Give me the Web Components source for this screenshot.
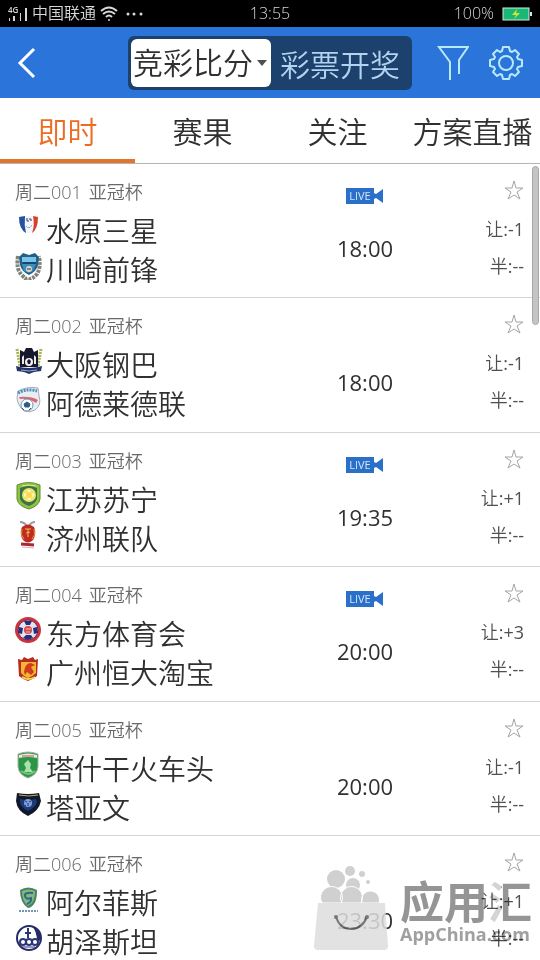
<!DOCTYPE html>
<html lang="zh-CN">
<head>
<meta charset="utf-8">
<meta name="viewport" content="width=device-width, initial-scale=1">
<title>竞彩比分</title>
<style>
    html, body {
        margin: 0;
        height: 100%;
        overflow: hidden;
    }
    body {
        background: #fff;
        color: #303030;
        font-family: "Open Sans", "Noto Sans CJK SC", sans-serif;
        font-weight: 350;
    }
</style>
</head>
<body>
<score-app></score-app>

<script>
const CRESTS = {
    suwon: `
        <path d="M4 4q5-2 9-1q5-1 10 1q0 11-5 15q-4 2-9 0Q4 14 4 4z" fill="#f4f6fa"/>
        <path d="M4 4l6-1q-1 9 1 17Q4 16 4 4z" fill="#2452a0"/>
        <path d="M23 4l-5-1q2 9-1 17q6-4 6-16z" fill="#d8402c"/>
        <path d="M12 5v3h2M15 5v2h2" stroke="#273c74" fill="none"/>
        <path d="M11 13q3 4 6-1" stroke="#8db0d8" fill="none"/>`,
    kawasaki: `
        <path d="M3 4q-2 13 3 18q5 6 7 5q4 1 9-5q4-6 2-18" fill="none" stroke="#7e8578" stroke-width="4" stroke-dasharray="3 1"/>
        <path d="M4 5l4-4 6 2 6-2 4 4-1 8q-2 7-9 10q-7-3-9-10z" fill="#235f87"/>
        <path d="M7 5h14v5H7z" fill="#77c4ed"/>
        <path d="M7 12h14l-3 7-4 2-5-2z" fill="#3d8fc2"/>
        <circle cx="14" cy="17" r="3" fill="#d8dcc8"/>
        <path d="M8 11h13M12 17h4" stroke="#17334a"/>`,
    gamba: `
        <path d="M2 2l3 17M26 2l-3 17" stroke="#aab24c" stroke-width="3" stroke-dasharray="2 1"/>
        <path d="M5 3l4 2 2-4h6l2 4 4-2v17H5z" fill="#17182c"/>
        <path d="M7 10l2-2v9H7zM21 10l-2-2v9h2z" fill="#e8e8ee"/>
        <circle cx="14" cy="15" r="4" fill="#f0f0f4"/>
        <path d="M11 5q3 6 6 0l-1 6h-4zM12 14l2-2 2 2-1 3h-2z" fill="#17182c"/>
        <path d="M1 19q13 4 26 0l-1 5-7 1-5 2-5-2-7-1z" fill="#233267"/>
        <path d="M6 23q8 2 16 0" stroke="#9aa4cc" fill="none"/>`,
    adelaide: `
        <path d="M3 5Q13 0 23 2l1 8q3 9-4 14q-5 3-11 1Q3 20 2 12z" fill="#e9eef4" stroke="#a5abb8"/>
        <path d="M3 7q9-5 19-2" stroke="#4e8fba" stroke-width="3" stroke-dasharray="2 1" fill="none"/>
        <path d="M4 11q12-1 19 3l-2 3q-8-5-16-4z" fill="#d96670"/>
        <circle cx="12" cy="19" r="6" fill="#fff" stroke="#7594b5"/>
        <path d="M9 18l3-2 3 2-1 3h-4zM7 22l2 2M16 22l-2 2" fill="#2f5a8c" stroke="#2f5a8c"/>`,
    jiangsu: `
        <path d="M2 3Q14-2 25 3v14q-1 7-11 10Q3 24 2 17z" fill="#93bf45" stroke="#5f8d2e"/>
        <path d="M5 6Q14 2 22 6v11q-2 5-8 7q-7-2-9-7z" fill="#36754a"/>
        <circle cx="14" cy="13" r="7" fill="#f0e46c"/>
        <path d="M14 8v10M9 13h10" stroke="#fff7b8" stroke-width="3"/>
        <circle cx="14" cy="13" r="3" fill="#f7d95a"/>
        <path d="M7 4q7-2 14 0" stroke="#dfe98f" fill="none"/>`,
    jeju: `
        <path d="M5 1q4 0 7 4M20 1q-4 0-6 4" stroke="#9a9aa4" stroke-width="2" fill="none"/>
        <path d="M7 6q6-5 12 0q3 6-1 13q-5 5-10 0Q4 12 7 6z" fill="#bf2b22"/>
        <path d="M7 8q-2 6 2 10M19 8q2 6-2 10" stroke="#e69a35" fill="none"/>
        <path d="M10 8h6M13 8v8M11 12l4-1" stroke="#f2c048" fill="none"/>
        <path d="M6 23l13 1" stroke="#a52a35" stroke-width="3"/>
        <path d="M7 26l12 1" stroke="#ddb2b4"/>`,
    eastern: `
        <circle cx="13" cy="14" r="13" fill="#c93440"/>
        <circle cx="13" cy="14" r="10" fill="#dfe3f4" stroke="#882a48"/>
        <path d="M9 5h8l-2 4h-4zM4 11l4 1-1 6-4-1zM22 11l-4 1 1 6 4-1zM8 22l3-3h5l2 3-5 2z" fill="#272f77"/>
        <circle cx="13" cy="14" r="4" fill="#d4494c"/>
        <path d="M11 13h5M11 16h4" stroke="#f5bd9c"/>`,
    evergrande: `
        <path d="M3 4l4 1 2-3 4 2 5-2 2 3 3-1-1 17q-4 3-9 5q-6-2-9-5z" fill="#b92b20"/>
        <path d="M6 7h15v11q-3 3-8 5q-5-2-7-5z" fill="#f2b832"/>
        <path d="M9 17q1-9 7-9l4 2-4 2 3 5-3 3-4-3-2 3z" fill="#d33b20"/>
        <path d="M7 22q6 4 13 0" stroke="#f4d34e" stroke-width="2" fill="none"/>`,
    lokomotiv: `
        <path d="M3 3q10-4 20 0v13q-1 8-10 11Q4 24 3 16z" fill="#2c9647" stroke="#a6b5a7"/>
        <path d="M4 4q9-3 18 0v3q-9-2-18 0z" fill="#eee8df"/>
        <path d="M7 5h12" stroke="#bc564b"/>
        <path d="M13 9l3 4-1 4 3 4H9l2-4-2-4z" fill="#a9e0ac"/>
        <path d="M6 20q8 6 14 0" stroke="#77c27a" stroke-width="2" fill="none"/>`,
    taawoun: `
        <path d="M2 3q11 2 22 0l2 8q-2 10-13 15Q2 21 1 11z" fill="#11182b"/>
        <path d="M4 5q10 2 19 0" stroke="#c5ad57" fill="none"/>
        <path d="M5 9q8 2 16 0l1 3q-2 6-9 9Q6 18 5 12z" fill="#1c3978"/>
        <circle cx="13" cy="13" r="4" fill="#7d9fd6"/>
        <path d="M10 11l2 1M16 11l-2 1M13 13v3M11 15l-1 1" stroke="#1c3978"/>`,
    fateh: `
        <path d="M5 5q8-5 17 0q0 10-3 14q-3 4-6 4q-8-5-8-18z" fill="#468263"/>
        <path d="M7 6q7-3 13 0q0 8-3 12l-4 3Q7 16 7 6z" fill="#84b77d"/>
        <path d="M18 8q-9-1-8 3t6 2q1 4-4 6" stroke="#2a6a82" stroke-width="2" fill="none"/>
        <path d="M4 26h19" stroke="#6c98b6" stroke-width="2" stroke-dasharray="2 1"/>`,
    esteghlal: `
        <circle cx="14" cy="14" r="12" fill="#fff" stroke="#252c68" stroke-width="2"/>
        <path d="M16 2a12 12 0 0 1 10 14l-4 2q0-12-6-16z" fill="#252c68"/>
        <g fill="none" stroke="#2d3776" stroke-width="2">
            <circle cx="8" cy="18" r="3"/><circle cx="14" cy="18" r="3"/><circle cx="20" cy="18" r="3"/>
            <path d="M13 4v10M10 9h6"/>
        </g>
        <path d="M7 23h13" stroke="#2d3776"/>`
};

const MATCHES = [
    { no: '周二001', live: true, time: '18:00', rq: '-1', home: ['suwon', '水原三星'], away: ['kawasaki', '川崎前锋'] },
    { no: '周二002', live: false, time: '18:00', rq: '-1', home: ['gamba', '大阪钢巴'], away: ['adelaide', '阿德莱德联'] },
    { no: '周二003', live: true, time: '19:35', rq: '+1', home: ['jiangsu', '江苏苏宁'], away: ['jeju', '济州联队'] },
    { no: '周二004', live: true, time: '20:00', rq: '+3', home: ['eastern', '东方体育会'], away: ['evergrande', '广州恒大淘宝'] },
    { no: '周二005', live: false, time: '20:00', rq: '-1', home: ['lokomotiv', '塔什干火车头'], away: ['taawoun', '塔亚文'] },
    { no: '周二006', live: false, time: '23:30', rq: '+1', home: ['fateh', '阿尔菲斯'], away: ['esteghlal', '胡泽斯坦'] }
];

class StatusBar extends HTMLElement {
    constructor() {
        super();
        this.attachShadow({ mode: 'open' });
        this.shadowRoot.innerHTML = `
            <style>
                :host {
                    display: grid;
                    grid-template-columns: 1fr auto 1fr;
                    align-items: center;
                    height: 27px;
                    padding: 0 8px;
                    background: #000;
                    color: #d8d8d8;
                    font-size: 16px;
                    line-height: 27px;
                }
                div { display: flex; align-items: center; gap: 4px; }
                .right { justify-content: flex-end; gap: 8px; }
                svg { display: block; overflow: visible; }
            </style>
            <div>
                <svg width="20" height="18" viewBox="0 0 20 18" fill="#d8d8d8">
                    <text x="0" y="8" font-size="8" font-weight="600">4G</text>
                    <path d="M1 13h1v3H1zM5 11h2v5H5zM12 8h1v8h-1zM17 3h2v13h-2z"/>
                </svg>
                <span>中国联通</span>
                <svg width="18" height="16" viewBox="0 0 18 16" fill="none" stroke="#d8d8d8" stroke-width="2">
                    <path d="M1 5q8-7 16 0M3 8q6-5 12 0M6 11q3-3 6 0"/>
                    <circle cx="9" cy="14" r="1" fill="#d8d8d8" stroke="none"/>
                </svg>
                <svg width="24" height="16" viewBox="0 0 24 16" fill="#d8d8d8">
                    <circle cx="6" cy="8" r="1.5"/><circle cx="12" cy="8" r="1.5"/><circle cx="19" cy="8" r="1.5"/>
                </svg>
            </div>
            <span>13:55</span>
            <div class="right">
                <span>100%</span>
                <svg width="30" height="14" viewBox="0 0 30 14">
                    <rect x="1" y="1" width="26" height="12" fill="#18b878" stroke="#d8e8e0"/>
                    <path d="M28 5h2v4h-2z" fill="#d8e8e0"/>
                    <path d="M15 2l-5 6h4l-2 4 6-6h-4z" fill="#d8e030"/>
                </svg>
            </div>
        `;
    }
}

class AppHeader extends HTMLElement {
    constructor() {
        super();
        this.attachShadow({ mode: 'open' });
        this.shadowRoot.innerHTML = `
            <style>
                :host {
                    display: grid;
                    grid-template-columns: 1fr auto 1fr;
                    align-items: center;
                    height: 71px;
                    padding: 0 16px;
                    background: #2a74da;
                }
                button, select {
                    margin: 0;
                    padding: 0;
                    border: 0;
                    background: none;
                    color: inherit;
                    font: inherit;
                }
                svg { display: block; fill: none; }
                .back { justify-self: start; }
                .switch {
                    display: flex;
                    padding: 3px;
                    border-radius: 6px;
                    background: #1b416c;
                    font-size: 30px;
                }
                .picker { position: relative; }
                .picker::after {
                    content: "";
                    position: absolute;
                    top: 21px;
                    right: 4px;
                    border: 5px solid transparent;
                    border-top: 6px solid #505050;
                    border-bottom: 0;
                    pointer-events: none;
                }
                select {
                    appearance: none;
                    display: block;
                    width: 140px;
                    height: 48px;
                    padding: 0 2px;
                    border-radius: 6px;
                    background: #fff;
                    color: #303030;
                }
                .draw {
                    padding: 0 9px;
                    color: #b4d3f0;
                }
                .tools {
                    display: flex;
                    justify-content: flex-end;
                    gap: 19px;
                }
            </style>
            <button class="back" aria-label="返回">
                <svg width="22" height="34" viewBox="0 0 22 34" stroke="#fff" stroke-width="3"><path d="M18 3L4 17l14 14"/></svg>
            </button>
            <div class="switch">
                <div class="picker"><select aria-label="彩种"><option>竞彩比分</option></select></div>
                <button class="draw">彩票开奖</button>
            </div>
            <div class="tools">
                <button aria-label="筛选">
                    <svg width="32" height="36" viewBox="0 0 32 36" stroke="#b8eafa" stroke-width="2"><path d="M13 35V17L2 2h29L22 15v14"/></svg>
                </button>
                <button aria-label="设置">
                    <svg width="36" height="36" viewBox="0 0 36 36" stroke="#b8eafa" stroke-width="2" stroke-linejoin="round">
                        <path d="M15 2h6l1 4 2 1 3-2 4 4-2 3 1 2 4 1v6l-4 1-1 2 2 3-4 4-3-2-2 1-1 4h-6l-1-4-2-1-3 2-4-4 2-3-1-2-4-1v-6l4-1 1-2-2-3 4-4 3 2 2-1z"/>
                        <circle cx="18" cy="18" r="7"/>
                    </svg>
                </button>
            </div>
        `;
    }
}

class TabBar extends HTMLElement {
    constructor() {
        super();
        this.attachShadow({ mode: 'open' });
        this.shadowRoot.innerHTML = `
            <style>
                :host {
                    display: block;
                    border-bottom: 1px solid #b4b4b4;
                }
                nav { display: flex; }
                button {
                    flex: 1 1 0;
                    height: 65px;
                    margin: 0;
                    padding: 0 0 1px;
                    border: 0;
                    background: none;
                    color: inherit;
                    font: inherit;
                    font-size: 30px;
                    white-space: nowrap;
                }
                button[aria-selected="true"] {
                    padding-top: 3px;
                    border-bottom: 4px solid #e0762e;
                    color: #ee6c22;
                }
            </style>
            <nav role="tablist">
                <button role="tab" aria-selected="true">即时</button>
                <button role="tab" aria-selected="false">赛果</button>
                <button role="tab" aria-selected="false">关注</button>
                <button role="tab" aria-selected="false">方案直播</button>
            </nav>
        `;
        const tabs = this.shadowRoot.querySelectorAll('button');
        tabs.forEach(tab => tab.addEventListener('click', () => {
            tabs.forEach(t => t.setAttribute('aria-selected', String(t === tab)));
        }));
    }
}

class TeamLine extends HTMLElement {
    constructor() {
        super();
        this.attachShadow({ mode: 'open' });
        this.shadowRoot.innerHTML = `
            <style>
                :host {
                    display: flex;
                    gap: 3px;
                    font-size: 28px;
                    line-height: 39px;
                    white-space: nowrap;
                }
                svg {
                    flex: none;
                    margin-top: 1px;
                }
            </style>
            <svg width="28" height="28" viewBox="0 0 28 28"></svg>
            <span><slot></slot></span>
        `;
    }

    connectedCallback() {
        this.shadowRoot.querySelector('svg').innerHTML = CRESTS[this.getAttribute('crest')];
    }
}

class LiveBadge extends HTMLElement {
    constructor() {
        super();
        this.attachShadow({ mode: 'open' });
        this.shadowRoot.innerHTML = `
            <style>
                :host {
                    display: flex;
                    height: 16px;
                    font-size: 11px;
                    line-height: 16px;
                    font-weight: 400;
                    color: #d4e6fa;
                }
                span {
                    width: 28px;
                    background: #2a70c8;
                    text-align: center;
                }
            </style>
            <span>LIVE</span>
            <svg width="10" height="16" viewBox="0 0 10 16" fill="#2a70c8"><path d="M0 5l2 1 7-5v14l-7-5-2 1z"/></svg>
        `;
    }
}

class MatchRow extends HTMLElement {
    constructor() {
        super();
        this.attachShadow({ mode: 'open' });
        this.shadowRoot.innerHTML = `
            <style>
                :host {
                    display: grid;
                    grid-template-columns: 1fr 100px 109px;
                    box-sizing: border-box;
                    height: 134px;
                    padding: 16px 16px 0 15px;
                    border-bottom: 1px solid #d4d4d4;
                }
                :host(:nth-child(even)) { height: 135px; }
                .no {
                    display: flex;
                    gap: 7px;
                    margin-bottom: 8px;
                    color: #686868;
                    font-size: 18px;
                    line-height: 24px;
                }
                .middle, .side {
                    display: flex;
                    flex-direction: column;
                }
                .middle { align-items: center; }
                .live {
                    height: 16px;
                    margin: 8px 0 29px;
                }
                time {
                    font-size: 22px;
                    font-weight: 400;
                    line-height: 30px;
                }
                .side {
                    align-items: flex-end;
                    gap: 13px;
                    color: #505050;
                    font-size: 18px;
                    line-height: 24px;
                }
                .side span { display: flex; }
                .side b { font-weight: 400; }
                button {
                    height: 20px;
                    margin: 0 0 4px;
                    padding: 0;
                    border: 0;
                    background: none;
                }
                button svg { display: block; }
            </style>
            <div>
                <div class="no"><slot name="no"></slot><slot name="league"></slot></div>
                <slot name="teams"></slot>
            </div>
            <div class="middle">
                <div class="live"><slot name="live"></slot></div>
                <time><slot name="time"></slot></time>
            </div>
            <div class="side">
                <button aria-label="关注">
                    <svg width="20" height="20" viewBox="0 0 20 20" fill="none" stroke="#a4a4a4"><path d="M10 1l2 7h7l-6 4 3 7-6-4-6 4 3-7-6-4h7z"/></svg>
                </button>
                <span>让<b>:<slot name="rq"></slot></b></span>
                <span>半<b>:--</b></span>
            </div>
        `;
    }
}

class MatchList extends HTMLElement {
    constructor() {
        super();
        this.attachShadow({ mode: 'open' });
        this.shadowRoot.innerHTML = `
            <style>
                :host {
                    display: block;
                    position: relative;
                    overflow: hidden;
                }
                .thumb {
                    position: absolute;
                    top: 2px;
                    right: 1px;
                    width: 5px;
                    height: 157px;
                    border: 1px solid #a8a8a8;
                    border-radius: 4px;
                    background: #c4c4c4;
                }
            </style>
            <section></section>
            <div class="thumb"></div>
        `;
    }

    connectedCallback() {
        this.shadowRoot.querySelector('section').innerHTML = MATCHES.map(m => `
            <match-row>
                <span slot="no">${m.no}</span>
                <span slot="league">亚冠杯</span>
                <team-line slot="teams" crest="${m.home[0]}">${m.home[1]}</team-line>
                <team-line slot="teams" crest="${m.away[0]}">${m.away[1]}</team-line>
                ${m.live ? '<live-badge slot="live"></live-badge>' : ''}
                <span slot="time">${m.time}</span>
                <span slot="rq">${m.rq}</span>
            </match-row>
        `).join('');
    }
}

class StoreMark extends HTMLElement {
    constructor() {
        super();
        this.attachShadow({ mode: 'open' });
        this.shadowRoot.innerHTML = `
            <style>
                :host {
                    display: flex;
                    align-items: flex-end;
                    gap: 12px;
                    color: #959595;
                    pointer-events: none;
                }
                svg { display: block; opacity: .85; }
                /* keeps the row text readable under the letters */
                .words { mix-blend-mode: multiply; }
                .name {
                    font-size: 44px;
                    line-height: 42px;
                    font-weight: 700;
                }
                /* the three drops of the last character are paler */
                .drops {
                    background: linear-gradient(90deg, #d4d4d4 30%, #959595 30%);
                    background-clip: text;
                    -webkit-background-clip: text;
                    color: transparent;
                }
                .site {
                    margin-bottom: 5px;
                    font-size: 18px;
                    line-height: 22px;
                    font-weight: 700;
                    color: #a0a0a0;
                }
            </style>
            <svg width="74" height="84" viewBox="0 0 74 84">
                <g fill="#c8c8c8">
                    <circle cx="22" cy="13" r="9"/><circle cx="36" cy="5" r="5"/><circle cx="48" cy="8" r="3"/>
                    <circle cx="54" cy="16" r="2"/><circle cx="39" cy="19" r="7"/>
                    <path d="M8 37a11 11 0 1 1 19 0zM28 37a11 11 0 1 1 19 0zM48 37a9 9 0 1 1 17 0z" stroke="#fff"/>
                </g>
                <path d="M4 37h67l3 43q0 4-4 4H4q-4 0-4-4z" fill="#dedede"/>
                <path d="M22 51q4 12 15 12t16-12" fill="none" stroke="#606060" stroke-width="2"/>
                <circle cx="22" cy="51" r="2" fill="#606060"/><circle cx="53" cy="51" r="2" fill="#606060"/>
            </svg>
            <div class="words">
                <div class="name">应用<span class="drops">汇</span></div>
                <div class="site">AppChina.com</div>
            </div>
        `;
    }
}

class ScoreApp extends HTMLElement {
    constructor() {
        super();
        this.attachShadow({ mode: 'open' });
        this.shadowRoot.innerHTML = `
            <style>
                :host {
                    display: flex;
                    flex-direction: column;
                    position: relative;
                    height: 100vh;
                    overflow: hidden;
                    background: #fff;
                }
                status-bar, app-header, tab-bar { flex: none; }
                match-list { flex: 1; }
                store-mark {
                    position: absolute;
                    right: 8px;
                    bottom: 10px;
                }
            </style>
            <status-bar></status-bar>
            <app-header></app-header>
            <tab-bar></tab-bar>
            <match-list></match-list>
            <store-mark></store-mark>
        `;
    }
}

customElements.define('status-bar', StatusBar);
customElements.define('app-header', AppHeader);
customElements.define('tab-bar', TabBar);
customElements.define('team-line', TeamLine);
customElements.define('live-badge', LiveBadge);
customElements.define('match-row', MatchRow);
customElements.define('match-list', MatchList);
customElements.define('store-mark', StoreMark);
customElements.define('score-app', ScoreApp);
</script>
</body>
</html>
